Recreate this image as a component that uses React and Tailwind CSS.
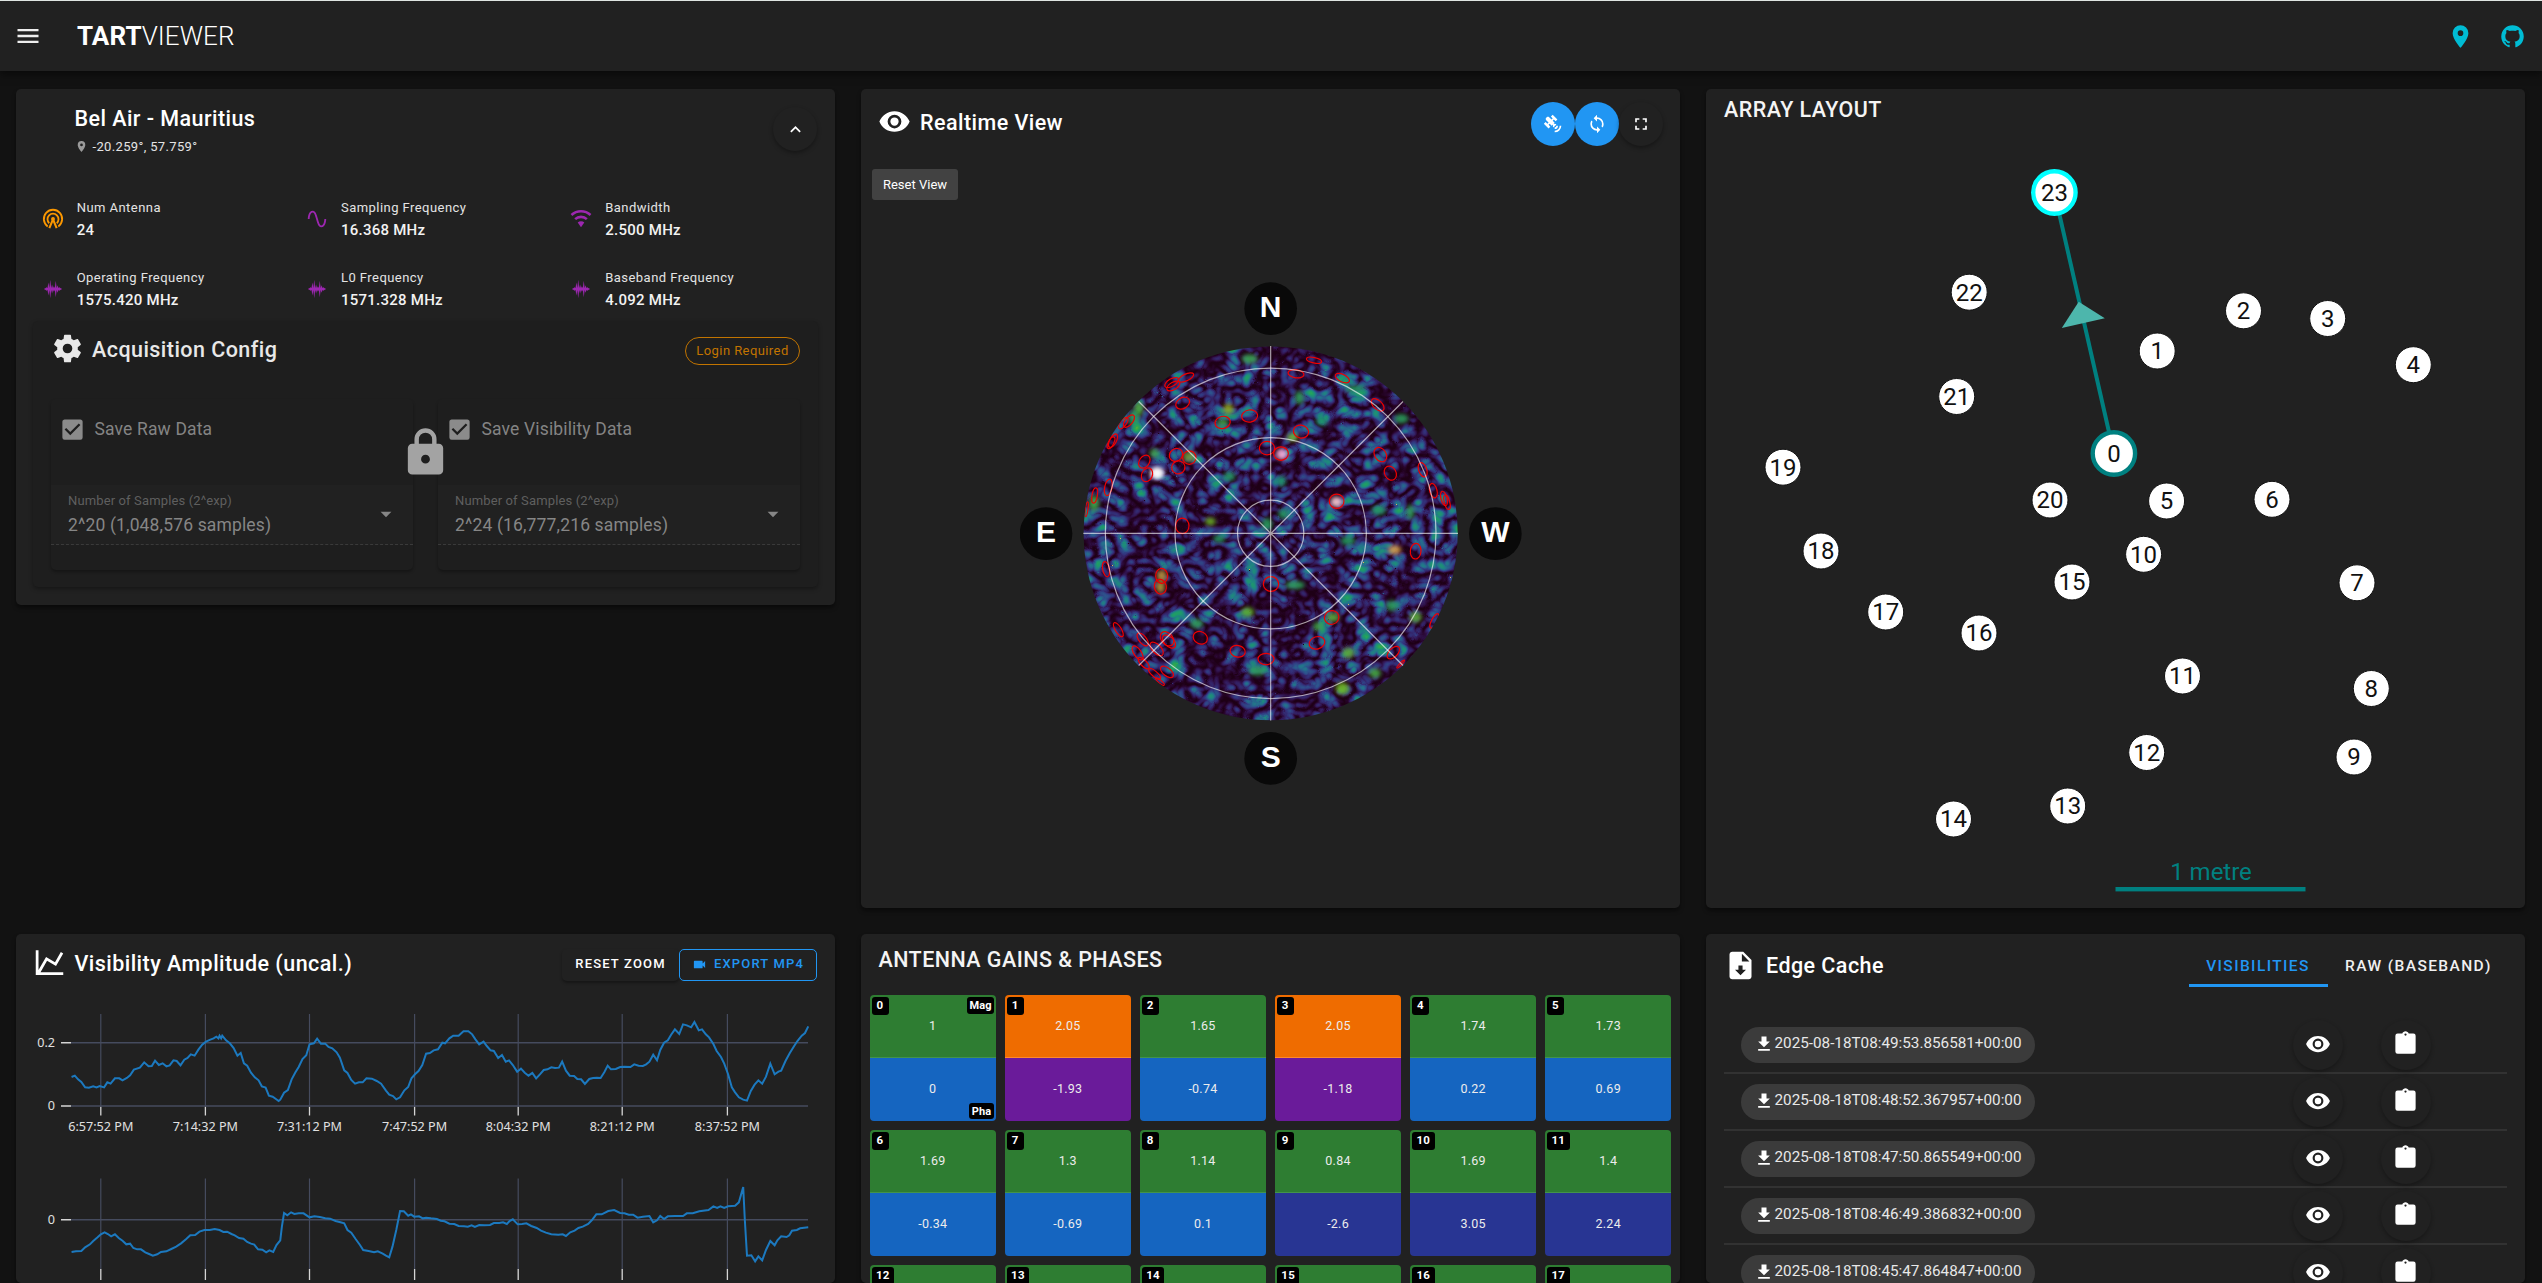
import React from "react";

const ICONS = {
  menu: "M3,6H21V8H3V6M3,11H21V13H3V11M3,16H21V18H3V16Z",
  pin: "M12,11.5A2.5,2.5 0 0,1 9.5,9A2.5,2.5 0 0,1 12,6.5A2.5,2.5 0 0,1 14.5,9A2.5,2.5 0 0,1 12,11.5M12,2A7,7 0 0,0 5,9C5,14.25 12,22 12,22C12,22 19,14.25 19,9A7,7 0 0,0 12,2Z",
  github:
    "M12,2A10,10 0 0,0 2,12C2,16.42 4.87,20.17 8.84,21.5C9.34,21.58 9.5,21.27 9.5,21C9.5,20.77 9.5,20.14 9.5,19.31C6.73,19.91 6.14,17.97 6.14,17.97C5.68,16.81 5.03,16.5 5.03,16.5C4.12,15.88 5.1,15.9 5.1,15.9C6.1,15.97 6.63,16.93 6.63,16.93C7.5,18.45 8.97,18 9.54,17.76C9.63,17.11 9.89,16.67 10.17,16.42C7.95,16.17 5.62,15.31 5.62,11.5C5.62,10.39 6,9.5 6.65,8.79C6.55,8.54 6.2,7.5 6.75,6.15C6.75,6.15 7.59,5.88 9.5,7.17C10.29,6.95 11.15,6.84 12,6.84C12.85,6.84 13.71,6.95 14.5,7.17C16.41,5.88 17.25,6.15 17.25,6.15C17.8,7.5 17.45,8.54 17.35,8.79C18,9.5 18.38,10.39 18.38,11.5C18.38,15.32 16.04,16.16 13.81,16.41C14.17,16.72 14.5,17.33 14.5,18.26C14.5,19.6 14.5,20.68 14.5,21C14.5,21.27 14.66,21.59 15.17,21.5C19.14,20.16 22,16.42 22,12A10,10 0 0,0 12,2Z",
  chevronUp: "M7.41,15.41L12,10.83L16.59,15.41L18,14L12,8L6,14L7.41,15.41Z",
  sine: "M16.5,21C13.5,21 12.31,16.76 11.05,12.28C10.14,9.04 9,5 7.5,5C4.11,5 4,11.93 4,12H2C2,11.63 2.06,3 7.5,3C10.5,3 11.71,7.25 12.97,11.74C13.83,14.8 15,19 16.5,19C19.94,19 20.03,12.07 20.03,12H22.03C22.03,12.37 21.97,21 16.5,21Z",
  waveform:
    "M22 12L20 13L19 14L18 13L17 16L16 13L15 21L14 13L13 15L12 13L11 17L10 13L9 22L8 13L7 19L6 13L5 14L4 13L2 12L4 11L5 10L6 11L7 5L8 11L9 2L10 11L11 7L12 11L13 9L14 11L15 3L16 11L17 8L18 11L19 10L20 11L22 12Z",
  cog: "M12,15.5A3.5,3.5 0 0,1 8.5,12A3.5,3.5 0 0,1 12,8.5A3.5,3.5 0 0,1 15.5,12A3.5,3.5 0 0,1 12,15.5M19.43,12.97C19.47,12.65 19.5,12.33 19.5,12C19.5,11.67 19.47,11.34 19.43,11L21.54,9.37C21.73,9.22 21.78,8.95 21.66,8.73L19.66,5.27C19.54,5.05 19.27,4.96 19.05,5.05L16.56,6.05C16.04,5.66 15.5,5.32 14.87,5.07L14.5,2.42C14.46,2.18 14.25,2 14,2H10C9.75,2 9.54,2.18 9.5,2.42L9.13,5.07C8.5,5.32 7.96,5.66 7.44,6.05L4.95,5.05C4.73,4.96 4.46,5.05 4.34,5.27L2.34,8.73C2.21,8.95 2.27,9.22 2.46,9.37L4.57,11C4.53,11.34 4.5,11.67 4.5,12C4.5,12.33 4.53,12.65 4.57,12.97L2.46,14.63C2.27,14.78 2.21,15.05 2.34,15.27L4.34,18.73C4.46,18.95 4.73,19.03 4.95,18.95L7.44,17.94C7.96,18.34 8.5,18.68 9.13,18.93L9.5,21.58C9.54,21.82 9.75,22 10,22H14C14.25,22 14.46,21.82 14.5,21.58L14.87,18.93C15.5,18.67 16.04,18.34 16.56,17.94L19.05,18.95C19.27,19.03 19.54,18.95 19.66,18.73L21.66,15.27C21.78,15.05 21.73,14.78 21.54,14.63L19.43,12.97Z",
  checkbox:
    "M10,17L5,12L6.41,10.58L10,14.17L17.59,6.58L19,8M19,3H5C3.89,3 3,3.89 3,5V19A2,2 0 0,0 5,21H19A2,2 0 0,0 21,19V5C21,3.89 20.1,3 19,3Z",
  lock: "M12,17A2,2 0 0,0 14,15C14,13.89 13.1,13 12,13A2,2 0 0,0 10,15A2,2 0 0,0 12,17M18,8A2,2 0 0,1 20,10V20A2,2 0 0,1 18,22H6A2,2 0 0,1 4,20V10C4,8.89 4.9,8 6,8H7V6A5,5 0 0,1 12,1A5,5 0 0,1 17,6V8H18M12,3A3,3 0 0,0 9,6V8H15V6A3,3 0 0,0 12,3Z",
  menuDown: "M7,10L12,15L17,10H7Z",
  chartLine:
    "M16,11.78L20.24,4.45L21.97,5.45L16.74,14.5L10.23,10.75L5.46,19H22V21H2V3H4V17.54L9.5,8L16,11.78Z",
  video:
    "M17,10.5V7A1,1 0 0,0 16,6H4A1,1 0 0,0 3,7V17A1,1 0 0,0 4,18H16A1,1 0 0,0 17,17V13.5L21,17.5V6.5L17,10.5Z",
  eye: "M12,9A3,3 0 0,0 9,12A3,3 0 0,0 12,15A3,3 0 0,0 15,12A3,3 0 0,0 12,9M12,17A5,5 0 0,1 7,12A5,5 0 0,1 12,7A5,5 0 0,1 17,12A5,5 0 0,1 12,17M12,4.5C7,4.5 2.73,7.61 1,12C2.73,16.39 7,19.5 12,19.5C17,19.5 21.27,16.39 23,12C21.27,7.61 17,4.5 12,4.5Z",
  satellite:
    "M11.62,1L17.28,6.67L15.16,8.79L13.04,6.67L11.62,8.09L13.95,10.41L12.79,11.58L13.24,12.04C14.17,11.61 15.31,11.77 16.07,12.54L12.54,16.07C11.77,15.31 11.61,14.17 12.04,13.24L11.58,12.79L10.41,13.95L8.09,11.62L6.67,13.04L8.79,15.16L6.67,17.28L1,11.62L3.14,9.5L5.26,11.62L6.67,10.21L3.84,7.38C3.06,6.6 3.06,5.33 3.84,4.55L4.55,3.84C5.33,3.06 6.6,3.06 7.38,3.84L10.21,6.67L11.62,5.26L9.5,3.14L11.62,1M18,14A4,4 0 0,1 14,18V16A2,2 0 0,0 16,14H18M22,14A8,8 0 0,1 14,22V20A6,6 0 0,0 20,14H22Z",
  sync: "M12,18A6,6 0 0,1 6,12C6,11 6.25,10.03 6.7,9.2L5.24,7.74C4.46,8.97 4,10.43 4,12A8,8 0 0,0 12,20V23L16,19L12,15M12,4V1L8,5L12,9V6A6,6 0 0,1 18,12C18,13 17.75,13.97 17.3,14.8L18.76,16.26C19.54,15.03 20,13.57 20,12A8,8 0 0,0 12,4Z",
  fullscreen:
    "M5,5H10V7H7V10H5V5M14,5H19V10H17V7H14V5M17,14H19V19H14V17H17V14M10,17V19H5V14H7V17H10Z",
  fileDownload:
    "M14,2H6C4.89,2 4,2.89 4,4V20C4,21.11 4.89,22 6,22H18C19.11,22 20,21.11 20,20V8L14,2M12,19L8,15H10.5V12H13.5V15H16L12,19M13,9V3.5L18.5,9H13Z",
  download: "M5,20H19V18H5M19,9H15V3H9V9H5L12,16L19,9Z",
  clipboard:
    "M19,3H14.82C14.4,1.84 13.3,1 12,1C10.7,1 9.6,1.84 9.18,3H5A2,2 0 0,0 3,5V19A2,2 0 0,0 5,21H19A2,2 0 0,0 21,19V5A2,2 0 0,0 19,3M12,3A1,1 0 0,1 13,4A1,1 0 0,1 12,5A1,1 0 0,1 11,4A1,1 0 0,1 12,3",
};

function Icon({ name, className }) {
  return (
    <svg viewBox="0 0 24 24" fill="currentColor" className={`shrink-0 ${className}`}>
      <path d={ICONS[name]} />
    </svg>
  );
}

function AntennaIcon() {
  return (
    <svg viewBox="0 0 24 24" className="size-[22px] shrink-0 text-[#fb9700]" fill="none" stroke="currentColor" strokeWidth="2">
      <path d="M6.2 20.1A10 10 0 1 1 17.8 20.1" />
      <path d="M7.9 16.6A6 6 0 1 1 16.1 16.6" />
      <path d="M8 22L12 12.5L16 22" strokeWidth="2.3" />
      <circle cx="12" cy="12" r="2.1" fill="currentColor" stroke="none" />
    </svg>
  );
}

function BandwidthIcon() {
  return (
    <svg viewBox="0 0 24 24" className="size-[22px] shrink-0 text-[#9c27b0]" fill="none" stroke="currentColor" strokeWidth="2.8">
      <path d="M1.6 7.6A15.5 15.5 0 0 1 22.4 7.6" />
      <path d="M5.6 12.2A9.3 9.3 0 0 1 18.4 12.2" />
      <path d="M8.4 15.9A5.2 5.2 0 0 1 15.6 15.9L12 21Z" fill="currentColor" stroke="none" />
    </svg>
  );
}

const card = "overflow-hidden rounded-[5px] bg-[#212121] shadow-[0_3px_4px_rgba(0,0,0,0.45)]";
const title = "text-[21.5px] font-medium leading-none tracking-[0.45px]";

function Header() {
  return (
    <header className="relative z-10 flex h-[71px] items-center border-t border-[#dfe5e2] bg-[#212121] pl-[14px] pr-[16px] shadow-[0_3px_8px_rgba(0,0,0,0.5)]">
      <Icon name="menu" className="size-[28px] text-[#eeeeee]" />
      <h1 className="ml-[35px] text-[26px] leading-none tracking-[0.1px] text-white">
        <span className="font-bold">TART</span>
        <span className="font-light">VIEWER</span>
      </h1>
      <div className="ml-auto flex gap-[25px] text-[#00bcd4]">
        <Icon name="pin" className="size-[27px]" />
        <Icon name="github" className="size-[27px]" />
      </div>
    </header>
  );
}

const INFO = [
  ["antenna", "Num Antenna", "24"],
  ["sine", "Sampling Frequency", "16.368 MHz"],
  ["bandwidth", "Bandwidth", "2.500 MHz"],
  ["waveform", "Operating Frequency", "1575.420 MHz"],
  ["waveform", "L0 Frequency", "1571.328 MHz"],
  ["waveform", "Baseband Frequency", "4.092 MHz"],
];

function InfoIcon({ kind }) {
  if (kind === "antenna") return <AntennaIcon />;
  if (kind === "bandwidth") return <BandwidthIcon />;
  return <Icon name={kind} className="size-[22px] text-[#9c27b0]" />;
}

function ConfigBox({ label, value }) {
  return (
    <div className="h-[171px] w-[362px] rounded-[5px] shadow-[0_2px_3px_rgba(0,0,0,0.3)]">
      <div className="flex h-[86px] items-start gap-[9px] pl-[7.5px] pt-[17px] text-[#8b8b8b]">
        <Icon name="checkbox" className="size-[27px]" />
        <span className="mt-[5px] text-[17.5px] leading-none tracking-[0.15px] text-[#848484]">{label}</span>
      </div>
      <div className="flex h-[60px] items-center justify-between border-b border-dashed border-[#3a3a3a] bg-[#212121] pl-[17px] pr-[14px]">
        <div className="flex flex-col gap-[10px]">
          <span className="text-[13px] leading-none tracking-[0.01em] text-[#5f5f5f]">Number of Samples (2^exp)</span>
          <span className="text-[17.5px] leading-none tracking-[0.15px] text-[#868686]">{value}</span>
        </div>
        <Icon name="menuDown" className="mb-[2px] size-[26px] text-[#868686]" />
      </div>
    </div>
  );
}

function InfoCard() {
  return (
    <section className={`${card} h-[516px]`}>
      <div className="flex h-[102px] justify-between pl-[58.5px] pr-[18px]">
        <div className="pt-[19px]">
          <h2 className={`${title} text-white`}>Bel Air - Mauritius</h2>
          <div className="mt-[10px] flex items-center gap-[5px]">
            <Icon name="pin" className="size-[13px] text-[#9a9a9a]" />
            <span className="text-[13px] leading-none tracking-[0.35px] text-[#e4e4e4]">-20.259°, 57.759°</span>
          </div>
        </div>
        <button className="mt-[18px] flex size-[44px] items-center justify-center rounded-full text-white shadow-[0_2px_4px_rgba(0,0,0,0.35)]">
          <Icon name="chevronUp" className="size-[21px]" />
        </button>
      </div>
      <div className="grid grid-cols-[264.3px_264.3px_264.3px] pl-[25.5px]">
        {INFO.map(([kind, label, value]) => (
          <div key={label} className="flex h-[70px] items-start">
            <div className="pt-[17px]">
              <InfoIcon kind={kind} />
            </div>
            <div className="ml-[13.2px] flex flex-col gap-[9px] pt-[10px]">
              <span className="text-[13px] leading-none tracking-[0.45px] text-[#e4e4e4]">{label}</span>
              <span className="text-[15px] font-medium leading-none tracking-[0.25px] text-[#f2f2f2]">{value}</span>
            </div>
          </div>
        ))}
      </div>
      <div className="relative mx-[17px] -mt-[10px] h-[266px] rounded-[5px] bg-[#1e1e1e] px-[18px] shadow-[0_2px_4px_rgba(0,0,0,0.35)]">
        <div className="flex h-[78px] items-start">
          <Icon name="cog" className="-ml-[0.5px] mt-[11px] size-[33px] text-[#e8e8e8]" />
          <h3 className={`ml-[8.5px] mt-[18px] ${title} text-[#e8e8e8]`}>Acquisition Config</h3>
          <span className="ml-auto mt-[16px] flex h-[28px] w-[115px] items-center justify-center rounded-full border-[1.5px] border-[#c27400] pb-px text-[13px] tracking-[0.42px] text-[#c27400]">
            Login Required
          </span>
        </div>
        <div className="flex justify-between">
          <ConfigBox label="Save Raw Data" value="2^20 (1,048,576 samples)" />
          <ConfigBox label="Save Visibility Data" value="2^24 (16,777,216 samples)" />
        </div>
        <Icon name="lock" className="absolute left-[365.5px] top-[105px] size-[53px] text-[#a3a3a3]" />
      </div>
    </section>
  );
}

/* Sky map, drawn on a 1560 x 1568 plate. Each satellite is cx, cy, rx, ry, rotation. */
const SATELLITES = [
  [882, 267, 23, 8, 12], [828, 307, 24, 12, 8], [967, 320, 23, 11, 25], [1073, 399, 23, 13, 42],
  [498, 318, 25, 10, -25], [455, 333, 23, 11, -30], [460, 343, 22, 11, -30], [488, 394, 22, 16, -30],
  [608, 451, 23, 18, -12], [689, 432, 24, 18, -8], [843, 478, 23, 19, 12], [741, 527, 23, 20, 0],
  [783, 543, 22, 20, 0], [468, 547, 21, 18, -35], [475, 584, 20, 19, -20], [508, 555, 20, 20, 0],
  [373, 567, 21, 15, -55], [381, 606, 21, 16, -65], [327, 447, 22, 11, -50], [310, 453, 20, 9, -52],
  [279, 505, 22, 10, -62], [273, 511, 19, 8, -62], [265, 643, 25, 11, -78], [224, 667, 23, 8, -80],
  [200, 708, 22, 4, -82], [1081, 546, 23, 17, 55], [1111, 601, 22, 17, 60], [1208, 591, 22, 12, 70],
  [1240, 653, 22, 11, 75], [1272, 676, 22, 9, 75], [1281, 687, 22, 8, 75], [950, 684, 22, 21, 0],
  [487, 757, 20, 23, 0], [1187, 832, 16, 23, 5], [258, 885, 10, 23, -12], [425, 905, 18, 22, -5],
  [421, 937, 18, 22, -12], [753, 929, 23, 22, 0], [935, 1028, 22, 20, -15], [891, 1103, 24, 18, -18],
  [541, 1088, 22, 18, 25], [653, 1128, 23, 17, 12], [738, 1151, 24, 17, 0], [441, 1091, 24, 17, 48],
  [447, 1099, 24, 14, 45], [410, 1121, 25, 13, 45], [368, 1093, 23, 11, 50], [295, 1064, 24, 9, 58],
  [353, 1133, 24, 11, 55], [371, 1163, 22, 9, 45], [441, 1189, 23, 12, 38], [404, 1195, 22, 8, 40],
  [420, 1218, 16, 5, 40], [1120, 1132, 23, 13, -45], [1243, 1038, 24, 8, -62], [1142, 1166, 16, 3, -45],
];

const HOT = [
  [411, 601, 22, 18, "#ffffff"], [411, 601, 12, 12, "#ffffff"], [785, 545, 17, 17, "#ffb8e0"], [949, 686, 18, 16, "#ffd0d8"],
  [1124, 828, 20, 14, "#d8a24a"], [425, 905, 15, 18, "#b9953c"], [421, 938, 14, 18, "#b79a36"],
  [625, 411, 16, 16, "#8fae24"], [683, 1012, 20, 14, "#5fb02c"], [967, 1238, 20, 18, "#6fc020"],
  [985, 1133, 18, 16, "#5faf34"], [508, 552, 20, 16, "#6fa040"], [356, 410, 14, 22, "#4fae3a"],
  [938, 1028, 20, 14, "#5fae3c"], [571, 744, 16, 12, "#6ab428"], [1065, 1193, 18, 14, "#47b04a"],
  [1187, 1027, 18, 16, "#5cae34"], [818, 495, 18, 12, "#76b02a"], [689, 263, 24, 14, "#3aaa52"],
  [838, 378, 14, 20, "#2fa35c"], [905, 447, 18, 14, "#1f9a66"], [741, 752, 16, 18, "#259e58"],
  [784, 625, 14, 16, "#1f9a66"], [1144, 440, 22, 14, "#2aa05c"], [1116, 993, 18, 16, "#2aa05c"],
  [342, 440, 16, 26, "#2aa05c"], [222, 690, 16, 24, "#3fa84c"], [1076, 711, 22, 14, "#249c60"],
  [530, 1046, 20, 14, "#2fa35c"], [628, 611, 18, 14, "#249c60"], [712, 1186, 26, 14, "#2fa35c"],
  [1171, 716, 12, 22, "#2fa35c"], [984, 801, 22, 14, "#249c60"], [403, 542, 14, 14, "#3fa84c"],
  [790, 722, 16, 14, "#249c60"], [895, 1055, 16, 14, "#3fa84c"], [825, 932, 30, 12, "#2fa35c"],
  [1006, 352, 30, 12, "#249c60"], [608, 452, 18, 12, "#3fa84c"], [598, 795, 18, 12, "#249c60"],
];

function SkyMap() {
  const badges = [["N", 752, 114], ["E", 78, 780], ["W", 1426, 780], ["S", 752, 1445]];
  return (
    <svg viewBox="0 0 1560 1568" preserveAspectRatio="none" className="h-[530px] w-[520px]">
      <defs>
        <filter id="noise" x="0" y="0" width="1" height="1" colorInterpolationFilters="sRGB">
          <feTurbulence type="turbulence" baseFrequency="0.018 0.02" numOctaves="2" seed="11" />
          <feColorMatrix values="1.05 0 0 0 -0.06  1.05 0 0 0 -0.06  1.05 0 0 0 -0.06  0 0 0 0 1" />
          <feComponentTransfer>
            <feFuncR type="table" tableValues="0.12 0.16 0.20 0.20 0.18 0.14 0.12 0.12 0.2 0.5 0.9" />
            <feFuncG type="table" tableValues="0.0 0.02 0.10 0.20 0.32 0.45 0.55 0.62 0.66 0.7 0.7" />
            <feFuncB type="table" tableValues="0.09 0.18 0.35 0.49 0.55 0.55 0.48 0.40 0.3 0.15 0.4" />
          </feComponentTransfer>
        </filter>
        <filter id="soft" x="-0.5" y="-0.5" width="2" height="2">
          <feGaussianBlur stdDeviation="6" />
        </filter>
        <clipPath id="disc">
          <ellipse cx="752" cy="779" rx="561" ry="553" />
        </clipPath>
      </defs>
      <g clipPath="url(#disc)">
        <rect x="190" y="225" width="1124" height="1110" filter="url(#noise)" />
        {HOT.map(([x, y, rx, ry, c], i) => (
          <ellipse key={i} cx={x} cy={y} rx={rx} ry={ry} fill={c} filter="url(#soft)" opacity="0.88" />
        ))}
        <g fill="none" stroke="#f00000" strokeWidth="3.6">
          {SATELLITES.map(([x, y, rx, ry, a], i) => (
            <ellipse key={i} cx={x} cy={y} rx={rx} ry={ry} transform={`rotate(${a} ${x} ${y})`} />
          ))}
        </g>
      </g>
      <g fill="none" stroke="#ffffff" strokeOpacity="0.62" strokeWidth="3.6">
        <ellipse cx="752" cy="779" rx="99.5" ry="98" />
        <ellipse cx="752" cy="779" rx="287" ry="283" />
        <ellipse cx="752" cy="779" rx="496" ry="489" />
        <path d="M190 779H1314M752 225V1333M356 389L1149 1170M1149 389L356 1170" />
      </g>
      {badges.map(([t, x, y]) => (
        <g key={t}>
          <ellipse cx={x} cy={y} rx="79" ry="78" fill="#090909" />
          <text x={x} y={y + 25} textAnchor="middle" fontSize="90" fontWeight="700" fill="#ffffff" className="font-['Liberation_Sans',sans-serif]">
            {t}
          </text>
        </g>
      ))}
    </svg>
  );
}

function RealtimeCard() {
  return (
    <section className={`${card} h-[819px]`}>
      <div className="flex h-[66px] items-start pl-[17px] pr-[17px]">
        <Icon name="eye" className="mt-[16px] size-[33px] text-white" />
        <h2 className={`ml-[9px] mt-[22.5px] ${title} text-white`}>Realtime View</h2>
        <div className="ml-auto mt-[13px] flex text-white">
          <button className="flex size-[44px] items-center justify-center rounded-full bg-[#2196f3]">
            <Icon name="satellite" className="size-[20px]" />
          </button>
          <button className="flex size-[44px] items-center justify-center rounded-full bg-[#2196f3]">
            <Icon name="sync" className="size-[20px]" />
          </button>
          <button className="flex size-[44px] items-center justify-center rounded-full shadow-[0_2px_4px_rgba(0,0,0,0.35)]">
            <Icon name="fullscreen" className="size-[20px]" />
          </button>
        </div>
      </div>
      <button className="ml-[11px] mt-[14px] flex h-[31px] w-[86px] items-center justify-center rounded-[3px] bg-[#424242] text-[13px] leading-none text-white">
        Reset View
      </button>
      <div className="ml-[159px] mt-[70px]">
        <SkyMap />
      </div>
    </section>
  );
}

/* Antenna centres, in card pixels. */
const ANTENNAS = [
  [1, 451.2, 262], [2, 537.5, 221.8], [3, 621.7, 229.5], [4, 707.3, 275.7], [5, 460.6, 412], [6, 566, 410.3],
  [7, 651, 493.8], [8, 665.3, 599.5], [9, 648, 668], [10, 437.6, 465.3], [11, 476.5, 587], [12, 440.7, 663.5],
  [13, 361.7, 717], [14, 247.5, 730], [15, 366, 493], [16, 273, 544], [17, 179.7, 523], [18, 115, 462],
  [19, 77, 378.2], [20, 344, 411], [21, 250.7, 307.5], [22, 263.2, 203.2],
];

function ArrayCard() {
  return (
    <section className={`${card} h-[819px]`}>
      <svg viewBox="0 0 819 819" className="block size-[819px]" textAnchor="middle" fontSize="24">
        <text x="18" y="28" textAnchor="start" fontSize="21.5" fontWeight="500" letterSpacing="0.45" fill="#f4f4f4">
          ARRAY LAYOUT
        </text>
        <path d="M348.4 103.5L407.9 364.5" stroke="#008080" strokeWidth="4" />
        <path d="M372.7 212.7L398.8 229.3L355.8 239Z" fill="#4db6ac" />
        {ANTENNAS.map(([n, x, y]) => (
          <g key={n}>
            <circle cx={x} cy={y} r="18" fill="#ffffff" stroke="#111111" strokeWidth="1" />
            <text x={x} y={y + 8.3} fill="#111111">{n}</text>
          </g>
        ))}
        <circle cx="348.4" cy="103.5" r="21.2" fill="#ffffff" stroke="#00ffff" strokeWidth="4.4" />
        <text x="348.4" y="111.8" fill="#111111">23</text>
        <circle cx="407.9" cy="364.5" r="21.2" fill="#ffffff" stroke="#008080" strokeWidth="4.4" />
        <text x="407.9" y="372.8" fill="#111111">0</text>
        <text x="505" y="791" fill="#008080">1 metre</text>
        <rect x="409.5" y="798" width="190" height="4.4" fill="#008080" />
      </svg>
    </section>
  );
}

const AMPLITUDE =
  "132,471 138,467 144,478 150,486 157,502 164,503 172,499 178,502 184,498 192,502 198,487 204,491 212,475 220,475 226,481 234,474 240,466 247,449 258,443 266,427 274,439 280,438 286,422 293,435 300,430 307,439 313,436 320,421 326,423 333,436 340,419 346,414 352,403 359,407 366,389 373,374 380,365 388,359 394,355 399,350 403,355 405,347 408,355 410,347 417,361 424,370 431,384 438,407 444,399 450,430 456,437 463,458 470,472 477,481 483,499 490,503 496,527 503,530 509,537 514,543 517,539 524,518 531,510 538,478 545,457 551,441 558,417 565,406 571,373 579,370 585,356 592,371 600,371 606,381 613,385 621,397 627,413 635,451 641,459 648,480 655,491 662,487 669,487 676,475 686,476 695,483 703,491 712,512 718,524 725,528 731,538 738,532 746,511 753,501 759,475 766,462 772,453 779,435 786,401 793,399 800,391 808,388 816,368 821,370 829,355 836,347 846,347 855,334 864,334 871,343 877,358 884,373 892,365 898,378 905,391 911,393 919,414 926,405 933,425 939,421 946,435 954,455 961,446 968,458 975,467 982,459 989,475 996,463 1003,450 1010,448 1017,442 1024,444 1031,443 1037,425 1044,452 1051,467 1059,468 1065,477 1072,478 1079,492 1087,477 1094,474 1101,473 1108,474 1115,456 1121,437 1127,448 1136,447 1144,441 1152,440 1163,441 1170,433 1178,437 1186,438 1192,433 1198,425 1205,404 1212,421 1218,390 1225,368 1232,361 1238,344 1245,328 1253,342 1260,313 1267,316 1275,322 1281,306 1289,331 1295,328 1302,343 1308,352 1316,372 1322,393 1330,411 1336,431 1343,462 1350,502 1356,517 1363,532 1371,539 1378,542 1385,513 1392,494 1399,481 1406,491 1413,470 1421,431 1429,463 1436,455 1441,452 1449,423 1457,399 1465,378 1471,363 1479,347 1485,339 1491,319";

const PHASE =
  "132,996 140,994 150,993 157,982 166,973 172,963 180,952 186,943 193,937 199,942 205,949 212,943 219,954 226,962 233,973 240,971 246,984 253,988 260,988 268,997 275,1002 282,1007 290,1003 297,996 307,994 316,987 325,980 334,970 343,958 351,946 360,945 368,935 377,930 387,930 396,927 405,930 412,936 419,935 427,942 433,946 441,954 449,956 456,966 463,971 469,974 476,988 484,989 491,997 497,991 504,996 510,975 517,961 520,920 524,879 530,886 537,877 543,882 551,880 560,880 571,892 580,889 590,891 600,895 609,896 619,903 628,907 635,910 641,930 648,938 656,957 664,975 670,990 680,993 690,997 697,994 706,1001 712,1007 718,1012 724,980 731,930 738,873 745,874 753,887 758,883 764,890 773,889 780,895 786,893 795,895 806,897 813,902 820,904 829,911 838,912 846,918 856,919 863,920 870,916 876,921 884,915 894,916 904,915 911,909 921,909 928,907 935,912 940,903 946,898 955,913 963,912 971,910 980,918 990,924 998,932 1007,938 1017,943 1030,944 1038,943 1044,948 1052,937 1060,932 1067,924 1075,920 1085,912 1092,900 1100,883 1110,883 1122,873 1133,870 1144,879 1152,880 1160,884 1168,884 1176,893 1186,890 1198,888 1205,907 1212,901 1218,888 1225,897 1232,889 1245,888 1260,888 1267,880 1278,880 1290,874 1307,870 1316,859 1323,864 1329,859 1336,864 1343,859 1356,857 1363,847 1371,801 1374,900 1378,1007 1386,1006 1393,1024 1399,1009 1406,1021 1413,990 1421,963 1429,976 1434,961 1441,949 1451,951 1456,946 1461,932 1470,930 1476,925 1491,922";

const TICKS = [
  [84.8, "6:57:52 PM"], [189.4, "7:14:32 PM"], [293.5, "7:31:12 PM"], [398.6, "7:47:52 PM"],
  [502.2, "8:04:32 PM"], [606.2, "8:21:12 PM"], [711.4, "8:37:52 PM"],
];

function Charts() {
  return (
    <svg viewBox="0 0 819 279" className="block h-[279px] w-[819px]">
      <g fill="#e0e0e0" fontSize="12.6" className="font-['Noto_Sans','Open_Sans',sans-serif]">
        {TICKS.map(([x, label]) => (
          <g key={label}>
            <path d={`M${x} 10V102M${x} 174.5V265`} stroke="#454b5e" strokeWidth="1.2" />
            <path d={`M${x} 102.5V111.5M${x} 265V276`} stroke="#d5d5d5" strokeWidth="1.3" />
            <text x={x} y="126.5" textAnchor="middle">{label}</text>
          </g>
        ))}
        <path d="M55 38.7H792M55 102H792M55 215.7H792" stroke="#454b5e" strokeWidth="1.5" />
        <path d="M45 38.7H55M45 102H55M45 215.7H55" stroke="#d5d5d5" strokeWidth="1.4" />
        <text x="39" y="42.5" textAnchor="end">0.2</text>
        <text x="39" y="105.7" textAnchor="end">0</text>
        <text x="39" y="219.7" textAnchor="end">0</text>
      </g>
      <g transform="translate(-16 -84) scale(0.54209 0.33333)" fill="none" stroke="#1c79bf" strokeWidth="2">
        <polyline points={AMPLITUDE} vectorEffect="non-scaling-stroke" />
        <polyline points={PHASE} vectorEffect="non-scaling-stroke" />
      </g>
    </svg>
  );
}

function VisibilityCard() {
  return (
    <section className={`${card} h-[349px]`}>
      <div className="flex h-[70px] items-start pl-[16.5px] pr-[18px] pt-[14.5px]">
        <Icon name="chartLine" className="-mt-[3px] size-[33px] text-white" />
        <h2 className={`ml-[9px] mt-[4px] ${title} text-white`}>Visibility Amplitude (uncal.)</h2>
        <button className="ml-auto flex h-[32px] w-[117px] items-center justify-center rounded-[5px] pb-[2px] text-[13px] font-medium tracking-[0.09em] text-white shadow-[0_2px_3px_rgba(0,0,0,0.35)]">
          RESET ZOOM
        </button>
        <button className="flex h-[32px] w-[138px] items-center justify-center gap-[7px] rounded-[5px] border-[1.5px] border-[#2196f3] pb-px text-[13px] font-medium tracking-[0.09em] text-[#2196f3]">
          <Icon name="video" className="size-[15px]" />
          EXPORT MP4
        </button>
      </div>
      <Charts />
    </section>
  );
}

const GREEN = "bg-[#2e7d32] border-[#43934a]";
const ORANGE = "bg-[#ef6c00] border-[#ff8a2a]";
const BLUE = "bg-[#1565c0]";
const PURPLE = "bg-[#6a1b9a]";
const INDIGO = "bg-[#283593]";

const GAINS = [
  ["1", "0", GREEN, BLUE], ["2.05", "-1.93", ORANGE, PURPLE], ["1.65", "-0.74", GREEN, BLUE],
  ["2.05", "-1.18", ORANGE, PURPLE], ["1.74", "0.22", GREEN, BLUE], ["1.73", "0.69", GREEN, BLUE],
  ["1.69", "-0.34", GREEN, BLUE], ["1.3", "-0.69", GREEN, BLUE], ["1.14", "0.1", GREEN, BLUE],
  ["0.84", "-2.6", GREEN, INDIGO], ["1.69", "3.05", GREEN, INDIGO], ["1.4", "2.24", GREEN, INDIGO],
  ["", "", GREEN, BLUE], ["", "", GREEN, BLUE], ["", "", GREEN, BLUE],
  ["", "", GREEN, BLUE], ["", "", GREEN, BLUE], ["", "", GREEN, BLUE],
];

const tag = "absolute flex items-center justify-center rounded-[3px] bg-black font-bold leading-none text-white";

function GainsCard() {
  return (
    <section className={`${card} h-[349px]`}>
      <h2 className={`h-[61px] pl-[17.5px] pt-[15px] ${title} text-[#f4f4f4]`}>ANTENNA GAINS &amp; PHASES</h2>
      <div className="grid grid-cols-[repeat(6,125.5px)] gap-x-[9.6px] gap-y-[9px] pl-[9px]">
        {GAINS.map(([mag, pha, top, bottom], i) => (
          <div key={i} className="relative h-[126px] overflow-hidden rounded-[4px] text-[12.5px] leading-none tracking-[0.02em] text-[#ececec]">
            <div className={`flex h-[63px] items-center justify-center border-b ${top}`}>{mag}</div>
            <div className={`flex h-[63px] items-center justify-center pb-px ${bottom}`}>{pha}</div>
            <span className={`${tag} left-[1.5px] top-[2px] h-[18px] min-w-[17px] px-[4.5px] text-[11.5px]`}>{i}</span>
            {i === 0 && (
              <>
                <span className={`${tag} right-[1.5px] top-[2px] h-[17px] w-[27px] text-[11px] tracking-[0.1px]`}>Mag</span>
                <span className={`${tag} bottom-[2px] right-[1.5px] h-[16px] w-[25px] text-[11px] tracking-[0.1px]`}>Pha</span>
              </>
            )}
          </div>
        ))}
      </div>
    </section>
  );
}

const FILES = [
  "2025-08-18T08:49:53.856581+00:00",
  "2025-08-18T08:48:52.367957+00:00",
  "2025-08-18T08:47:50.865549+00:00",
  "2025-08-18T08:46:49.386832+00:00",
  "2025-08-18T08:45:47.864847+00:00",
];

function CacheCard() {
  return (
    <section className={`${card} h-[349px]`}>
      <div className="flex h-[83px] items-start pl-[18px] pr-[16.5px]">
        <Icon name="fileDownload" className="mt-[14.5px] size-[33px] text-white" />
        <h2 className={`ml-[9px] mt-[21px] ${title} text-white`}>Edge Cache</h2>
        <div className="ml-auto flex h-[53px] text-[15.5px] font-medium leading-none tracking-[0.09em]">
          <div className="flex w-[139px] items-center justify-center border-b-[3px] border-[#2196f3] pt-[15px] text-[#2196f3]">VISIBILITIES</div>
          <div className="flex w-[181px] items-center justify-center border-b-[3px] border-transparent pl-px pt-[15px] text-[#f0f0f0]">RAW (BASEBAND)</div>
        </div>
      </div>
      <ul className="mx-[18px]">
        {FILES.map((f) => (
          <li key={f} className="flex h-[57px] items-center border-b-2 border-[#323232] pl-[17px]">
            <span className="flex h-[36px] w-[294px] items-center rounded-full bg-[#3b3b3b] pl-[13px] text-[#e8e8e8]">
              <Icon name="download" className="mb-px size-[20px] text-white" />
              <span className="mb-px ml-[0.5px] text-[15.25px] leading-none">{f}</span>
            </span>
            <span className="ml-[258px] flex size-[50px] items-center justify-center rounded-full pb-px text-white shadow-[0_2px_4px_rgba(0,0,0,0.3)]">
              <Icon name="eye" className="size-[26px]" />
            </span>
            <span className="ml-[37.5px] flex size-[50px] items-center justify-center rounded-full pb-[2px] text-white shadow-[0_2px_4px_rgba(0,0,0,0.3)]">
              <Icon name="clipboard" className="size-[27px]" />
            </span>
          </li>
        ))}
      </ul>
    </section>
  );
}

export default function App() {
  return (
    <div className="h-[1283px] w-[2542px] overflow-hidden bg-[#121212] font-['Roboto',sans-serif]">
      <Header />
      <main className="grid grid-cols-[819px_819px_819px] items-start gap-x-[26px] pl-[16px] pt-[18px]">
        <InfoCard />
        <RealtimeCard />
        <ArrayCard />
      </main>
      <div className="mt-[26px] grid grid-cols-[819px_819px_819px] gap-x-[26px] pl-[16px]">
        <VisibilityCard />
        <GainsCard />
        <CacheCard />
      </div>
    </div>
  );
}
